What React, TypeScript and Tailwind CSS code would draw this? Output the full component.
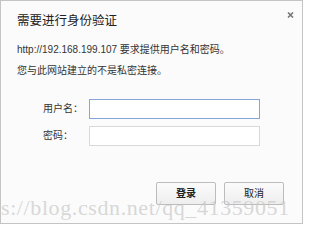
import React from "react";

const font = "font-['Liberation_Sans','Noto_Sans_CJK_SC',sans-serif]";

const Field = ({label, focused}: {label: string; focused?: boolean}) => (
    <div className="flex flex-row items-center">
        <span className="w-[46px] text-[10px] leading-[14px] text-[#333]">{label}</span>
        <div
            className={`w-[171px] h-[20px] bg-white border ${focused ? "border-[#86a6db]" : "border-[#d9d9d9]"}`}
        />
    </div>
);

const Button = ({children, bold}: {children: React.ReactNode; bold?: boolean}) => (
    <button
        className={`w-[60px] h-[23px] flex items-center justify-center border border-[#bcbcbc] rounded-[2px] bg-gradient-to-b from-[#fbfbfb] to-[#eeeeee] text-[10px] text-[#222] ${bold ? "font-bold" : ""}`}
    >
        {children}
    </button>
);

export default function App() {
    return (
        <div className={`${font} relative w-[303px] h-[224px] overflow-hidden border border-[#c4c4c4] bg-[#fbfbfb]`}>
            <div className="flex flex-row justify-between items-start pl-[16px] pr-[8px] pt-[12px]">
                <h1 className="text-[12.5px] leading-[16px] text-[#222]">需要进行身份验证</h1>
                <svg width="7" height="6" viewBox="0 0 7 6" className="mt-[-1px]">
                    <path d="M1 0.5 L6 5.5 M6 0.5 L1 5.5" stroke="#777" strokeWidth="1.6"/>
                </svg>
            </div>
            <div className="pl-[16px] mt-[14px] text-[10px] leading-[14px] text-[#333]">
                <p>http://192.168.199.107 要求提供用户名和密码。</p>
                <p className="mt-[7px]">您与此网站建立的不是私密连接。</p>
            </div>
            <div className="flex flex-col gap-[7px] pl-[42px] mt-[21px]">
                <Field label="用户名：" focused/>
                <Field label="密码："/>
            </div>
            <div className="flex flex-row justify-end gap-[8px] pr-[18px] mt-[36px]">
                <Button bold>登录</Button>
                <Button>取消</Button>
            </div>
            <div className="absolute left-0 top-[196px] whitespace-nowrap font-['Liberation_Serif',serif] text-[22px] leading-none tracking-[0.6px] text-[#c8c8c8]/70 pointer-events-none">
                s://blog.csdn.net/qq_41359051
            </div>
        </div>
    );
}
